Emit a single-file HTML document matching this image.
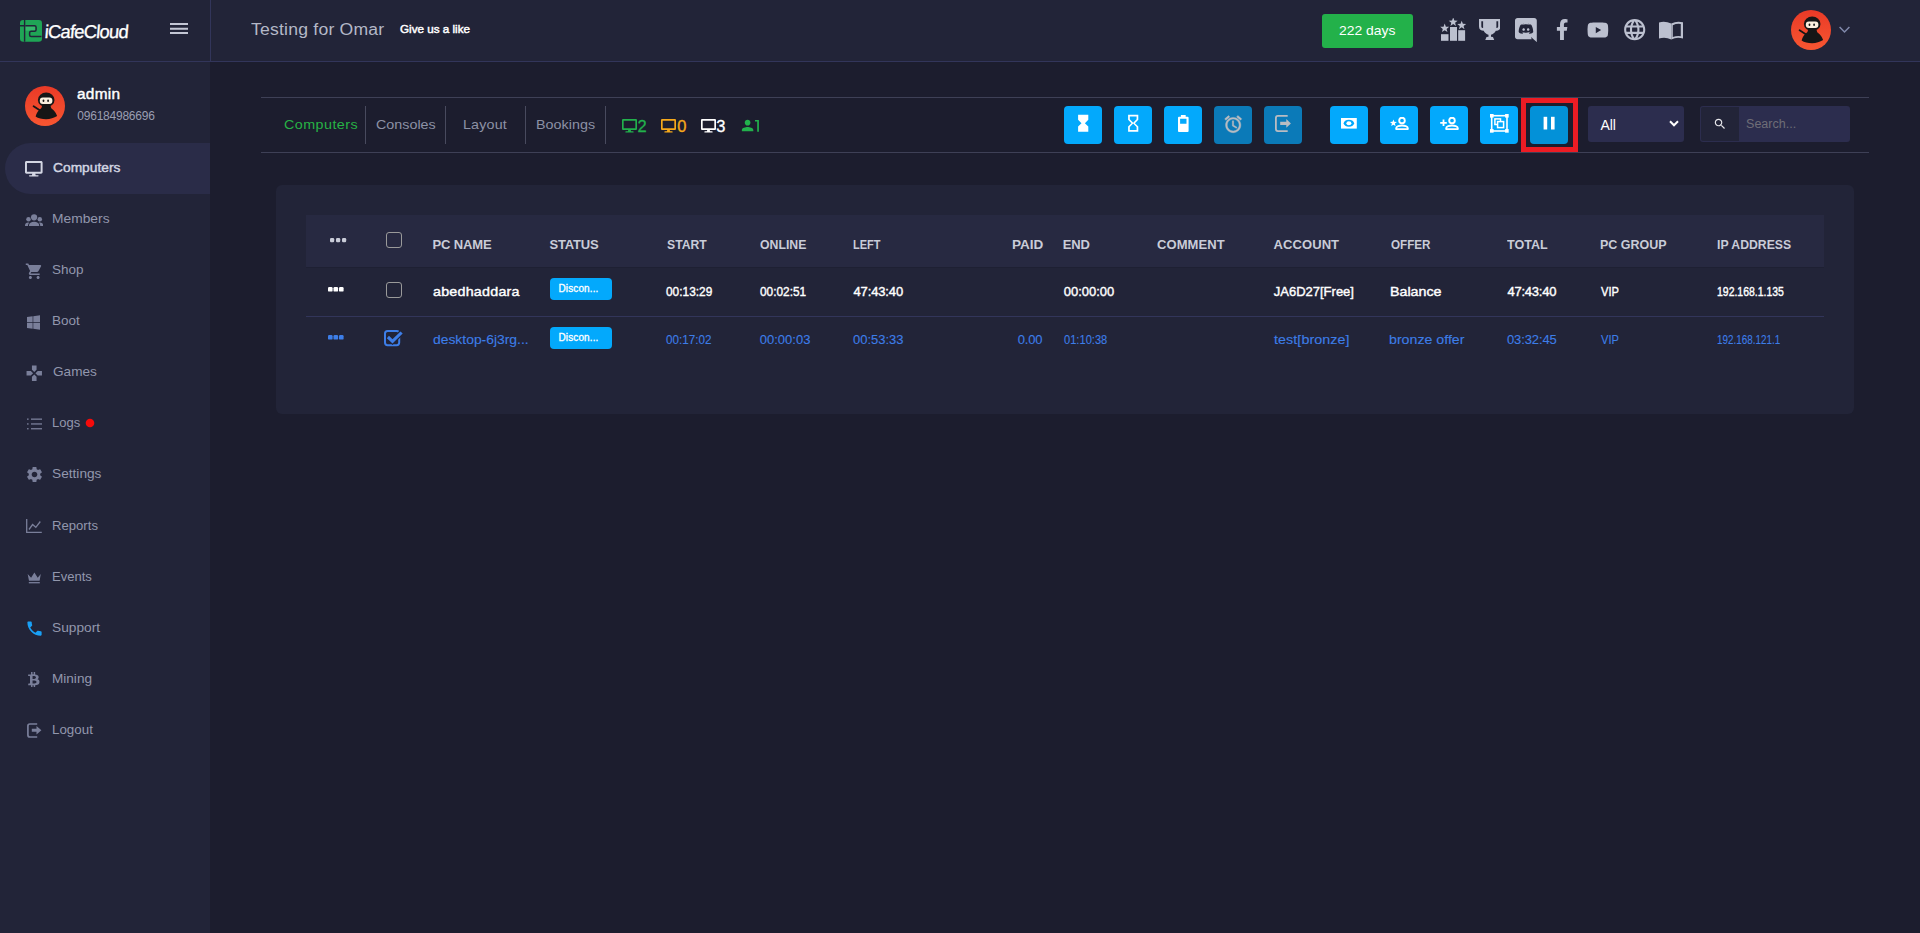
<!DOCTYPE html>
<html lang="en"><head><meta charset="utf-8"><title>iCafeCloud</title><style>
*{box-sizing:border-box}
html,body{margin:0;padding:0}
body{width:1920px;height:933px;overflow:hidden;background:#1c1d2e;font-family:"Liberation Sans",sans-serif;position:relative}
.b,.i,.t{position:absolute;display:block}
.t{white-space:pre;line-height:1}
header{position:absolute;left:0;top:0;width:1920px;height:62px;background:#222438;border-bottom:1px solid #32355a}
aside{position:absolute;left:0;top:62px;width:210px;height:871px;background:#222438}
main{position:absolute;left:0;top:0;width:1920px;height:933px}
</style></head><body>
<header>
<div class="b" style="left:210px;top:0px;width:1px;height:61px;background:#32355a;"></div>
<svg class="i" style="left:19.9px;top:20px" width="22" height="21.8" viewBox="0 0 22 21.8"><rect x="0" y="0" width="22" height="21.800" rx="3.200" fill="#1fa556"/><rect x="5.300" y="6.300" width="10" height="4.300" fill="#35b86b"/><path d="M4.600 0v21.800M0 5.700h4.600" stroke="#222438" stroke-width="1.400" fill="none"/><path d="M5.300 5.700h9.200q1.600 0 1.600 1.500v2.600q0 1.500-1.600 1.500H11.200q-1.600 0-1.600 1.500v2.200q0 1.500 1.600 1.500h10.300" stroke="#222438" stroke-width="1.500" fill="none"/></svg>
<span class="t" style="left:43.500px;top:22.700px;font-size:18.500px;color:#fff;letter-spacing:-.85px;-webkit-text-stroke:.3px #fff;transform:skewX(-5deg);transform-origin:0 100%">iCafeCloud</span>
<svg class="i" style="left:170px;top:22px" width="18" height="12" viewBox="0 0 18 12"><path d="M0 2h18M0 6.700h18M0 11.100h18" stroke="#c3c6d4" stroke-width="2"/></svg>
<span class="t" style="left:251.00px;top:22px;color:#b4b8c7;font-size:16px;transform:scaleX(1.1000);transform-origin:0 0;letter-spacing:0.19px;">Testing for Omar</span>
<span class="t" style="left:400.40px;top:24px;color:#ffffff;font-size:11px;-webkit-text-stroke:0.45px #ffffff;transform:scaleX(1.0606);transform-origin:0 0;">Give us a like</span>
<div class="b" style="left:1322px;top:14px;width:91px;height:34px;background:#23b14a;border-radius:3px;"></div>
<span class="t" style="left:1339.10px;top:24px;color:#ffffff;font-size:13.5px;transform:scaleX(1.0309);transform-origin:0 0;letter-spacing:0.00px;">222 days</span>
<svg class="i" style="left:1440px;top:18px" width="27" height="24" viewBox="0 0 27 24"><rect x="1" y="16.200" width="7.500" height="6.600" fill="#bcc0cf"/><rect x="10" y="9" width="7" height="13.800" fill="#bcc0cf"/><rect x="18.200" y="12.200" width="6.900" height="10.600" fill="#bcc0cf"/><polygon points="4.70,5.60 5.86,8.70 9.17,8.85 6.58,10.91 7.46,14.10 4.70,12.27 1.94,14.10 2.82,10.91 0.23,8.85 3.54,8.70" fill="#bcc0cf"/><polygon points="13.20,-0.60 14.36,2.50 17.67,2.65 15.08,4.71 15.96,7.90 13.20,6.07 10.44,7.90 11.32,4.71 8.73,2.65 12.04,2.50" fill="#bcc0cf"/><polygon points="21.70,2.70 22.86,5.80 26.17,5.95 23.58,8.01 24.46,11.20 21.70,9.37 18.94,11.20 19.82,8.01 17.23,5.95 20.54,5.80" fill="#bcc0cf"/></svg>
<svg class="i" style="left:1478.8px;top:18.9px" width="21.5" height="21.2" viewBox="0 0 21.500 21.200"><path fill-rule="evenodd" fill="#bcc0cf" d="M0 0H21.500V7.500C21.500 10.500 19.500 11.800 16.800 11.800C15.800 13.800 14 15.200 12 15.800V17.700L14 18L15.300 21.200H6.200L7.500 18L9.500 17.700V15.800C7.500 15.200 5.700 13.800 4.700 11.800C2 11.800 0 10.500 0 7.500Z M2.300 2.200H4.100V8.900H3.600Q2.300 8.900 2.300 7.500Z M19.200 2.200H17.400V8.900H17.900Q19.200 8.900 19.200 7.500Z"/></svg>
<svg class="i" style="left:1515px;top:18px" width="21.80" height="24.20" viewBox="0 0 448 512" preserveAspectRatio="none"><path fill="#bcc0cf" d="M297.216 243.2c0 15.616-11.520 28.416-26.112 28.416-14.336 0-26.112-12.800-26.112-28.416s11.520-28.416 26.112-28.416c14.592 0 26.112 12.800 26.112 28.416zm-119.552-28.416c-14.592 0-26.112 12.800-26.112 28.416s11.776 28.416 26.112 28.416c14.592 0 26.112-12.800 26.112-28.416.256-15.616-11.520-28.416-26.112-28.416zM448 52.736V512c-64.494-56.994-43.868-38.128-118.784-107.776l13.568 47.360H52.480C23.552 451.584 0 428.032 0 398.848V52.736C0 23.552 23.552 0 52.480 0h343.040C424.448 0 448 23.552 448 52.736zm-72.960 242.688c0-82.432-36.864-149.248-36.864-149.248-36.864-27.648-71.936-26.880-71.936-26.880l-3.584 4.096c43.520 13.312 63.744 32.512 63.744 32.512-60.811-33.329-132.244-33.335-191.232-7.424-9.472 4.352-15.104 7.424-15.104 7.424s21.248-20.224 67.328-33.536l-2.560-3.072s-35.072-.768-71.936 26.880c0 0-36.864 66.816-36.864 149.248 0 0 21.504 37.120 78.080 38.912 0 0 9.472-11.520 17.152-21.248-32.512-9.728-44.800-30.208-44.800-30.208 3.766 2.636 9.976 6.053 10.496 6.400 43.210 24.198 104.588 32.126 159.744 8.960 8.960-3.328 18.944-8.192 29.440-15.104 0 0-12.800 20.992-46.336 30.464 7.680 9.728 16.896 20.736 16.896 20.736 56.576-1.792 78.336-38.912 78.336-38.912z"/></svg>
<svg class="i" style="left:1556px;top:18.8px" width="12.40" height="21.00" viewBox="0 0 320 512" preserveAspectRatio="none"><path fill="#bcc0cf" d="M279.14 288l14.22-92.66h-88.91v-60.13c0-25.35 12.42-50.06 52.24-50.06h40.42V6.26S260.43 0 225.36 0c-73.22 0-121.08 44.38-121.08 124.72v70.62H22.89V288h81.39v224h100.17V288z"/></svg>
<svg class="i" style="left:1587.4px;top:19.6px" width="21.80" height="20.10" viewBox="0 0 576 512" preserveAspectRatio="none"><path fill="#bcc0cf" d="M549.655 124.083c-6.281-23.650-24.787-42.276-48.284-48.597C458.781 64 288 64 288 64S117.220 64 74.629 75.486c-23.497 6.322-42.003 24.947-48.284 48.597-11.412 42.867-11.412 132.305-11.412 132.305s0 89.438 11.412 132.305c6.281 23.650 24.787 41.500 48.284 47.821C117.220 448 288 448 288 448s170.780 0 213.371-11.486c23.497-6.321 42.003-24.171 48.284-47.821 11.412-42.867 11.412-132.305 11.412-132.305s0-89.438-11.412-132.305zm-317.510 213.508V175.185l142.739 81.205-142.739 81.201z"/></svg>
<svg class="i" style="left:1621.800px;top:16.600px" width="25.400" height="25.400" viewBox="0 0 24 24"><path fill="#bcc0cf" d="M11.990 2C6.470 2 2 6.480 2 12s4.470 10 9.990 10C17.520 22 22 17.520 22 12S17.520 2 11.990 2zm6.930 6h-2.950c-.32-1.250-.78-2.450-1.380-3.560 1.840.63 3.370 1.910 4.330 3.560zM12 4.040c.83 1.200 1.480 2.530 1.910 3.960h-3.820c.43-1.430 1.080-2.760 1.910-3.960zM4.260 14C4.100 13.360 4 12.690 4 12s.1-1.360.26-2h3.380c-.08.66-.14 1.320-.14 2 0 .68.06 1.340.14 2H4.260zm.82 2h2.950c.32 1.250.78 2.450 1.380 3.560-1.840-.63-3.370-1.900-4.330-3.560zm2.950-8H5.080c.96-1.660 2.490-2.930 4.330-3.560C8.810 5.550 8.350 6.750 8.030 8zM12 19.960c-.83-1.200-1.480-2.530-1.910-3.960h3.820c-.43 1.430-1.080 2.760-1.910 3.960zM14.340 14H9.660c-.09-.66-.16-1.320-.16-2 0-.68.07-1.350.16-2h4.680c.09.65.16 1.320.16 2 0 .68-.07 1.340-.16 2zm.25 5.560c.6-1.110 1.060-2.310 1.380-3.560h2.950c-.96 1.650-2.490 2.930-4.330 3.560zM16.360 14c.08-.66.14-1.320.14-2 0-.68-.06-1.340-.14-2h3.380c.16.64.26 1.310.26 2s-.1 1.360-.26 2h-3.380z"/></svg>
<svg class="i" style="left:1658.9px;top:21.4px" width="24.2" height="18.4" viewBox="0 0 24.200 18.400"><path d="M0 1.400Q6 -.6 12.300 2.600V18.400Q6 15.600 0 17.600Z" fill="#bcc0cf"/><path d="M12.300 2.600Q18 -.6 24.200 1.400V17.600Q18 15.600 12.300 18.400Z M13.800 4.200Q18 2.200 21.800 3V15.300Q18 14.700 13.800 16.100Z" fill="#bcc0cf" fill-rule="evenodd"/></svg>
<svg class="i" style="left:1791px;top:10px" width="40" height="40" viewBox="0 0 40 40"><defs><linearGradient id="ag1791" x1="0" y1="0" x2="0" y2="1"><stop offset="0" stop-color="#e93a27"/><stop offset="1" stop-color="#f85631"/></linearGradient></defs><circle cx="20" cy="20" r="20" fill="url(#ag1791)"/><path d="M10.600 30.600C12 25.500 15.500 22.200 18.500 21.300h5.500c3.500 1.200 6.800 4.500 8.100 8.800-3 2-7 3.200-11 3.200s-8-1-10.500-2.700z" fill="#161616"/><ellipse cx="21.200" cy="13.900" rx="8.300" ry="7.300" fill="#161616"/><path d="M17.300 19h8l1 3.500h-10z" fill="#161616"/><rect x="14.800" y="11.500" width="12.600" height="6.500" rx="3" fill="#fbf0df"/><ellipse cx="18.500" cy="14.800" rx=".9" ry="1.200" fill="#161616"/><ellipse cx="23.100" cy="14.800" rx=".9" ry="1.200" fill="#161616"/><path d="M8.600 20.200l5.800 3.900" stroke="#161616" stroke-width="1.800" stroke-linecap="round"/></svg>
<svg class="i" style="left:1838.5px;top:26.2px" width="11" height="8" viewBox="0 0 11 8"><path d="M.6 1l4.900 5 4.900-5" stroke="#8088aa" stroke-width="1.500" fill="none"/></svg>
</header>
<aside>
</aside>
<main>
<svg class="i" style="left:25px;top:86px" width="40" height="40" viewBox="0 0 40 40"><defs><linearGradient id="ag25" x1="0" y1="0" x2="0" y2="1"><stop offset="0" stop-color="#e93a27"/><stop offset="1" stop-color="#f85631"/></linearGradient></defs><circle cx="20" cy="20" r="20" fill="url(#ag25)"/><path d="M10.600 30.600C12 25.500 15.500 22.200 18.500 21.300h5.500c3.500 1.200 6.800 4.500 8.100 8.800-3 2-7 3.200-11 3.200s-8-1-10.500-2.700z" fill="#161616"/><ellipse cx="21.200" cy="13.900" rx="8.300" ry="7.300" fill="#161616"/><path d="M17.300 19h8l1 3.500h-10z" fill="#161616"/><rect x="14.800" y="11.500" width="12.600" height="6.500" rx="3" fill="#fbf0df"/><ellipse cx="18.500" cy="14.800" rx=".9" ry="1.200" fill="#161616"/><ellipse cx="23.100" cy="14.800" rx=".9" ry="1.200" fill="#161616"/><path d="M8.600 20.200l5.800 3.900" stroke="#161616" stroke-width="1.800" stroke-linecap="round"/></svg>
<span class="t" style="left:77.00px;top:87px;color:#ffffff;font-size:14px;-webkit-text-stroke:0.4px #ffffff;transform:scaleX(1.1000);transform-origin:0 0;letter-spacing:0.23px;">admin</span>
<span class="t" style="left:77.31px;top:110px;color:#9a9eb1;font-size:12px;letter-spacing:-0.23px;">096184986696</span>
<div class="b" style="left:5px;top:143px;width:205px;height:51px;background:#2a2c48;border-radius:26px 0 0 26px;"></div>
<nav>
<span class="t" style="left:53.20px;top:162px;color:#d3d6e3;font-size:12.6px;-webkit-text-stroke:0.4px #d3d6e3;transform:scaleX(1.0952);transform-origin:0 0;">Computers</span>
<span class="t" style="left:51.94px;top:213px;color:#9297ad;font-size:12.6px;transform:scaleX(1.0961);transform-origin:0 0;">Members</span>
<span class="t" style="left:52.10px;top:264px;color:#9297ad;font-size:12.6px;transform:scaleX(1.0714);transform-origin:0 0;">Shop</span>
<span class="t" style="left:52.08px;top:315px;color:#9297ad;font-size:12.6px;transform:scaleX(1.0720);transform-origin:0 0;">Boot</span>
<span class="t" style="left:53.20px;top:366px;color:#9297ad;font-size:12.6px;transform:scaleX(1.0800);transform-origin:0 0;">Games</span>
<span class="t" style="left:52.02px;top:417px;color:#9297ad;font-size:12.6px;transform:scaleX(1.0308);transform-origin:0 0;">Logs</span>
<span class="t" style="left:51.99px;top:468px;color:#9297ad;font-size:12.6px;transform:scaleX(1.0864);transform-origin:0 0;letter-spacing:0.00px;">Settings</span>
<span class="t" style="left:52.11px;top:520px;color:#9297ad;font-size:12.6px;transform:scaleX(1.0419);transform-origin:0 0;">Reports</span>
<span class="t" style="left:51.96px;top:571px;color:#9297ad;font-size:12.6px;transform:scaleX(1.0351);transform-origin:0 0;">Events</span>
<span class="t" style="left:51.96px;top:622px;color:#9297ad;font-size:12.6px;transform:scaleX(1.0884);transform-origin:0 0;">Support</span>
<span class="t" style="left:52.32px;top:673px;color:#9297ad;font-size:12.6px;transform:scaleX(1.0778);transform-origin:0 0;">Mining</span>
<span class="t" style="left:52.32px;top:724px;color:#9297ad;font-size:12.6px;transform:scaleX(1.0605);transform-origin:0 0;">Logout</span>
<svg class="i" style="left:25.3px;top:161.3px" width="17.60" height="15.60" viewBox="0 0 576 512" preserveAspectRatio="none"><path fill="#d3d6e3" d="M528 0H48C21.5 0 0 21.5 0 48v320c0 26.5 21.5 48 48 48h192l-16 48h-72c-13.3 0-24 10.7-24 24s10.7 24 24 24h272c13.3 0 24-10.7 24-24s-10.7-24-24-24h-72l-16-48h192c26.5 0 48-21.5 48-48V48c0-26.5-21.5-48-48-48zm-16 352H64V64h448v288z"/></svg>
<svg class="i" style="left:25px;top:213.6px" width="18.2" height="12.5" viewBox="0 0 18.200 12.500"><circle cx="9.100" cy="3.300" r="3.100" fill="#7a7f9a"/><circle cx="3.500" cy="5.200" r="2.250" fill="#7a7f9a"/><circle cx="14.800" cy="5.200" r="2.250" fill="#7a7f9a"/><path d="M4 12.500v-1.300c0-2.100 2.300-3.400 5.100-3.400s5.100 1.300 5.100 3.400v1.300z" fill="#7a7f9a"/><path d="M0 12.500v-1c0-1.600 1.300-2.900 3.200-2.900q.6 0 1 .1c-.8.700-1.200 1.600-1.200 2.600v1.200z" fill="#7a7f9a"/><path d="M18.200 12.500v-1c0-1.600-1.300-2.900-3.200-2.900q-.6 0-1 .1c.8.700 1.200 1.600 1.200 2.600v1.200z" fill="#7a7f9a"/></svg>
<svg class="i" style="left:24.7px;top:262.2px" width="18.5" height="18.5" viewBox="0 0 24 24"><path fill="#7a7f9a" d="M7 18c-1.1 0-1.99.9-1.99 2S5.9 22 7 22s2-.9 2-2-.9-2-2-2zM1 2v2h2l3.6 7.59-1.35 2.45c-.16.28-.25.61-.25.96 0 1.1.9 2 2 2h12v-2H7.42c-.14 0-.25-.11-.25-.25l.03-.12.9-1.63h7.45c.75 0 1.41-.41 1.75-1.03l3.58-6.49c.08-.14.12-.31.12-.48 0-.55-.45-1-1-1H5.21l-.94-2H1zm16 16c-1.1 0-1.99.9-1.99 2s.89 2 1.99 2 2-.9 2-2-.9-2-2-2z"/></svg>
<svg class="i" style="left:26.7px;top:313.7px" width="13.80" height="17.00" viewBox="0 0 448 512" preserveAspectRatio="none"><path fill="#7a7f9a" d="M0 93.7l183.6-25.3v177.4H0V93.7zm0 324.6l183.6 25.3V268.4H0v149.9zm203.8 28L448 480V268.4H203.8v177.9zm0-380.6v180.1H448V32L203.8 65.7z"/></svg>
<svg class="i" style="left:25.2px;top:364.1px" width="18.5" height="18.5" viewBox="0 0 24 24"><path fill="#7a7f9a" d="M15 7.5V2H9v5.5l3 3 3-3zM7.5 9H2v6h5.5l3-3-3-3zM9 16.5V22h6v-5.5l-3-3-3 3zM16.5 9l-3 3 3 3H22V9h-5.5z"/></svg>
<svg class="i" style="left:26.7px;top:418.3px" width="15" height="12" viewBox="0 0 15 12"><rect x="0" y="0.5" width="1.600" height="1.300" fill="#7a7f9a"/><rect x="4" y="0.5" width="11" height="1.300" fill="#7a7f9a"/><rect x="0" y="5.3" width="1.600" height="1.300" fill="#7a7f9a"/><rect x="4" y="5.3" width="11" height="1.300" fill="#7a7f9a"/><rect x="0" y="10.1" width="1.600" height="1.300" fill="#7a7f9a"/><rect x="4" y="10.1" width="11" height="1.300" fill="#7a7f9a"/></svg>
<svg class="i" style="left:24.5px;top:464.5px" width="19" height="19" viewBox="0 0 24 24"><path fill="#7a7f9a" d="M19.14 12.94c.04-.3.06-.61.06-.94 0-.32-.02-.64-.07-.94l2.03-1.58c.18-.14.23-.41.12-.61l-1.92-3.32c-.12-.22-.37-.29-.59-.22l-2.39.96c-.5-.38-1.03-.7-1.62-.94l-.36-2.54c-.04-.24-.24-.41-.48-.41h-3.84c-.24 0-.43.17-.47.41l-.36 2.54c-.59.24-1.13.57-1.62.94l-2.39-.96c-.22-.08-.47 0-.59.22L2.74 8.87c-.12.21-.08.47.12.61l2.03 1.58c-.05.3-.09.63-.09.94s.02.64.07.94l-2.03 1.58c-.18.14-.23.41-.12.61l1.92 3.32c.12.22.37.29.59.22l2.39-.96c.5.38 1.03.7 1.62.94l.36 2.54c.05.24.24.41.48.41h3.84c.24 0 .44-.17.47-.41l.36-2.54c.59-.24 1.13-.56 1.62-.94l2.39.96c.22.08.47 0 .59-.22l1.92-3.32c.12-.22.07-.47-.12-.61l-2.01-1.58zM12 15.6c-1.98 0-3.6-1.62-3.6-3.6s1.62-3.6 3.6-3.600 3.600 1.620 3.600 3.600-1.620 3.600-3.600 3.600z"/></svg>
<svg class="i" style="left:26.2px;top:518.7px" width="15.8" height="15" viewBox="0 0 15.8 15"><path d="M.7 0v13.300H15.800" stroke="#7a7f9a" stroke-width="1.300" fill="none"/><path d="M3 10.500l3.600-5 3.200 2.800 4.500-5.800" stroke="#7a7f9a" stroke-width="1.300" fill="none"/></svg>
<svg class="i" style="left:27px;top:572px" width="15" height="12" viewBox="0 0 15 12"><path d="M.65 1.900L4.100 5.800 7.400 .5 10.700 5.800 13.800 1.900 12.600 8.700H2z" fill="#7a7f9a"/><path d="M1.800 10.700h11" stroke="#7a7f9a" stroke-width="1.300"/></svg>
<svg class="i" style="left:24.5px;top:618.5px" width="19" height="19" viewBox="0 0 24 24"><path fill="#19a0f5" d="M6.62 10.79c1.44 2.83 3.76 5.14 6.59 6.59l2.2-2.2c.27-.27.67-.36 1.02-.24 1.12.37 2.33.57 3.57.57.55 0 1 .45 1 1V20c0 .55-.45 1-1 1-9.39 0-17-7.61-17-17 0-.55.45-1 1-1h3.5c.55 0 1 .45 1 1 0 1.25.2 2.45.57 3.57.11.35.03.74-.25 1.02l-2.2 2.2z"/></svg>
<svg class="i" style="left:28.1px;top:671.8px" width="11.60" height="15.40" viewBox="0 0 384 512" preserveAspectRatio="none"><path fill="#7a7f9a" d="M310.204 242.638c27.73-14.18 45.377-39.39 41.28-81.3-5.358-57.351-52.458-76.573-114.85-81.929V0h-48.528v77.203c-12.605 0-25.525.315-38.444.63V0h-48.528v79.409c-17.842.539-38.622.276-97.37 0v51.678c38.314-.678 58.417-3.14 63.023 21.427v217.429c-2.925 19.492-18.524 16.685-53.255 16.071L3.765 443.68c88.481 0 97.37.315 97.37.315V512h48.528v-67.06c13.234.315 26.154.315 38.444.315V512h48.528v-68.005c81.299-4.412 135.647-24.894 142.895-101.467 5.671-61.446-23.32-88.862-69.326-99.89zM150.608 134.553c27.415 0 113.126-8.507 113.126 48.528 0 54.515-85.71 48.212-113.126 48.212v-96.74zm0 251.776V279.821c32.772 0 133.127-9.138 133.127 53.255-.001 60.186-100.355 53.253-133.127 53.253z"/></svg>
<svg class="i" style="left:26.7px;top:721.8px" width="15" height="16" viewBox="0 0 15 16"><path d="M10.200 2H2.900c-1.100 0-2 .9-2 2v9c0 1.100.9 2 2 2H10.200" stroke="#7a7f9a" stroke-width="1.700" fill="none"/><path d="M4.800 6.700h4.700V3.900l4.900 4.300-4.900 4.300v-2.800h-4.700z" fill="#7a7f9a"/></svg>
<svg class="i" style="left:85px;top:418px" width="10" height="10" viewBox="0 0 10 10"><circle cx="5" cy="5" r="4.300" fill="#f50b0b"/></svg>
</nav>
<div class="b" style="left:261px;top:97px;width:1608px;height:1px;background:#3e4056;"></div>
<div class="b" style="left:261px;top:152px;width:1608px;height:1px;background:#3e4056;"></div>
<span class="t" style="left:284.00px;top:118px;color:#27b345;font-size:13px;transform:scaleX(1.1000);transform-origin:0 0;letter-spacing:0.42px;">Computers</span>
<span class="t" style="left:376.00px;top:118px;color:#8c91a5;font-size:13px;transform:scaleX(1.1000);transform-origin:0 0;letter-spacing:0.01px;">Consoles</span>
<span class="t" style="left:463.42px;top:118px;color:#8c91a5;font-size:13px;transform:scaleX(1.1000);transform-origin:0 0;letter-spacing:0.15px;">Layout</span>
<span class="t" style="left:536.21px;top:118px;color:#8c91a5;font-size:13px;transform:scaleX(1.1000);transform-origin:0 0;letter-spacing:0.05px;">Bookings</span>
<span class="t" style="left:637.42px;top:118px;color:#22b14c;font-size:16.5px;-webkit-text-stroke:0.3px #22b14c;">2</span>
<span class="t" style="left:677.21px;top:118px;color:#f6a91b;font-size:16.5px;-webkit-text-stroke:0.3px #f6a91b;">0</span>
<span class="t" style="left:716.27px;top:118px;color:#ffffff;font-size:16.5px;-webkit-text-stroke:0.3px #ffffff;">3</span>
<svg class="i" style="left:755.4px;top:120.4px" width="4" height="11.8" viewBox="0 0 4 11.800"><title>1</title><path d="M0 0H3.900V11.800H2.200V1.600H0Z" fill="#22b14c"/></svg>
<div class="b" style="left:365px;top:106px;width:1px;height:38px;background:#484a5e;"></div>
<div class="b" style="left:445px;top:106px;width:1px;height:38px;background:#484a5e;"></div>
<div class="b" style="left:525px;top:106px;width:1px;height:38px;background:#484a5e;"></div>
<div class="b" style="left:605px;top:106px;width:1px;height:38px;background:#484a5e;"></div>
<svg class="i" style="left:621.8px;top:119.25px" width="15.00" height="13.60" viewBox="0 0 576 512" preserveAspectRatio="none"><path fill="#22b14c" d="M528 0H48C21.5 0 0 21.5 0 48v320c0 26.5 21.5 48 48 48h192l-16 48h-72c-13.3 0-24 10.7-24 24s10.7 24 24 24h272c13.3 0 24-10.7 24-24s-10.7-24-24-24h-72l-16-48h192c26.5 0 48-21.5 48-48V48c0-26.5-21.5-48-48-48zm-16 352H64V64h448v288z"/></svg>
<svg class="i" style="left:661px;top:119.25px" width="15.00" height="13.60" viewBox="0 0 576 512" preserveAspectRatio="none"><path fill="#f6a91b" d="M528 0H48C21.5 0 0 21.5 0 48v320c0 26.5 21.5 48 48 48h192l-16 48h-72c-13.3 0-24 10.7-24 24s10.7 24 24 24h272c13.3 0 24-10.7 24-24s-10.7-24-24-24h-72l-16-48h192c26.5 0 48-21.5 48-48V48c0-26.5-21.5-48-48-48zm-16 352H64V64h448v288z"/></svg>
<svg class="i" style="left:700.6px;top:119.25px" width="15.00" height="13.60" viewBox="0 0 576 512" preserveAspectRatio="none"><path fill="#ffffff" d="M528 0H48C21.5 0 0 21.5 0 48v320c0 26.5 21.5 48 48 48h192l-16 48h-72c-13.3 0-24 10.7-24 24s10.7 24 24 24h272c13.3 0 24-10.7 24-24s-10.7-24-24-24h-72l-16-48h192c26.5 0 48-21.5 48-48V48c0-26.5-21.5-48-48-48zm-16 352H64V64h448v288z"/></svg>
<svg class="i" style="left:738.9px;top:117.4px" width="17.2" height="17.2" viewBox="0 0 24 24"><path fill="#22b14c" d="M12 12c2.210 0 4-1.790 4-4s-1.790-4-4-4-4 1.790-4 4 1.790 4 4 4zm0 2c-2.670 0-8 1.340-8 4v2h16v-2c0-2.660-5.330-4-8-4z"/></svg>
<div class="b" style="left:1064px;top:106px;width:38px;height:38px;background:#03a9fc;border-radius:4px;"></div>
<div class="b" style="left:1114px;top:106px;width:38px;height:38px;background:#03a9fc;border-radius:4px;"></div>
<div class="b" style="left:1164px;top:106px;width:38px;height:38px;background:#03a9fc;border-radius:4px;"></div>
<div class="b" style="left:1214px;top:106px;width:38px;height:38px;background:#0b7ab8;border-radius:4px;"></div>
<div class="b" style="left:1264px;top:106px;width:38px;height:38px;background:#0b7ab8;border-radius:4px;"></div>
<div class="b" style="left:1330px;top:106px;width:38px;height:38px;background:#03a9fc;border-radius:4px;"></div>
<div class="b" style="left:1380px;top:106px;width:38px;height:38px;background:#03a9fc;border-radius:4px;"></div>
<div class="b" style="left:1430px;top:106px;width:38px;height:38px;background:#03a9fc;border-radius:4px;"></div>
<div class="b" style="left:1480px;top:106px;width:38px;height:38px;background:#03a9fc;border-radius:4px;"></div>
<div class="b" style="left:1530px;top:106px;width:38px;height:38px;background:#0391d8;border-radius:4px;"></div>
<svg class="i" style="left:1072.9px;top:113.4px" width="20.4" height="20.4" viewBox="0 0 24 24"><path fill="#ffffff" d="M6 2v6h.01L6 8.01 10 12l-4 4 .01.01H6V22h12v-5.990h-.01L18 16l-4-4 4-3.990-.01-.01H18V2H6z"/></svg>
<svg class="i" style="left:1123px;top:113.4px" width="20.4" height="20.4" viewBox="0 0 24 24"><path fill="#ffffff" d="M6 2v6h.01L6 8.01 10 12l-4 4 .01.01H6V22h12v-5.990h-.01L18 16l-4-4 4-3.990-.01-.01H18V2H6zm10 14.500V20H8v-3.500l4-4 4 4zm-4-5l-4-4V4h8v3.500l-4 4z"/></svg>
<svg class="i" style="left:1178px;top:115.1px" width="10.6" height="17" viewBox="0 0 10.6 17"><path d="M2.900 0h4.800v1.700h1.900q1 0 1 1V16q0 1-1 1H1q-1 0-1-1V2.700q0-1 1-1h1.900z M2.100 3.800v4.900h6.400V3.800z" fill="#ffffff" fill-rule="evenodd"/></svg>
<svg class="i" style="left:1222.7px;top:113.5px" width="20.4" height="20.4" viewBox="0 0 24 24"><path stroke="#b9bcc2" stroke-width=".5" fill="#b9bcc2" d="M22 5.720l-4.600-3.860-1.290 1.530 4.600 3.860L22 5.720zM7.880 3.390L6.600 1.860 2 5.710l1.290 1.530 4.590-3.850zM12.500 8H11v6l4.750 2.850.750-1.230-4-2.370V8zM12 4c-4.970 0-9 4.030-9 9s4.020 9 9 9c4.970 0 9-4.030 9-9s-4.030-9-9-9zm0 16c-3.870 0-7-3.130-7-7s3.130-7 7-7 7 3.130 7 7-3.130 7-7 7z"/></svg>
<svg class="i" style="left:1275px;top:115.1px" width="16" height="17" viewBox="0 0 16 17"><path d="M12.700 .9H2.900c-1.100 0-2 .9-2 2v11.200c0 1.100.9 2 2 2h9.800" stroke="#b9bcc2" stroke-width="1.800" fill="none"/><path d="M5.200 6.700h6.100V4.100l4.600 4.300-4.600 4.300v-2.600H5.200z" fill="#b9bcc2"/></svg>
<svg class="i" style="left:1341.1px;top:118.2px" width="15.8" height="10.6" viewBox="0 0 15.8 10.6"><rect width="15.800" height="10.600" fill="#ffffff"/><ellipse cx="7.900" cy="5.300" rx="5.200" ry="3.500" fill="#03a9fc"/><ellipse cx="7.900" cy="5.300" rx="2.500" ry="2" fill="#ffffff"/></svg>
<svg class="i" style="left:1388.7px;top:117px" width="21" height="15" viewBox="0 0 21 15"><polygon points="4.40,2.40 5.31,4.84 7.92,4.96 5.88,6.58 6.57,9.09 4.40,7.65 2.23,9.09 2.92,6.58 0.88,4.96 3.49,4.84" fill="#ffffff"/><circle cx="13" cy="3.500" r="2.800" stroke="#ffffff" stroke-width="1.900" fill="none"/><path d="M7.200 12.100v-.8c0-1.900 3.500-2.800 5.800-2.800s5.800.9 5.800 2.800v.8z" stroke="#ffffff" stroke-width="1.900" fill="none" stroke-linejoin="round"/></svg>
<svg class="i" style="left:1438.7px;top:117px" width="21" height="15" viewBox="0 0 21 15"><path d="M4.500 2.500v6.600M1.200 5.800h6.600" stroke="#ffffff" stroke-width="1.800"/><circle cx="13" cy="3.500" r="2.800" stroke="#ffffff" stroke-width="1.900" fill="none"/><path d="M7.200 12.100v-.8c0-1.900 3.500-2.800 5.800-2.800s5.800.9 5.800 2.800v.8z" stroke="#ffffff" stroke-width="1.900" fill="none" stroke-linejoin="round"/></svg>
<svg class="i" style="left:1490px;top:114.2px" width="18.7" height="18.7" viewBox="0 0 18.700 18.700"><rect x="1.700" y="1.700" width="15.300" height="15.300" stroke="#ffffff" stroke-width="1.600" fill="none"/><rect x="0" y="0" width="3.600" height="3.600" fill="#ffffff"/><rect x="0" y="15.1" width="3.600" height="3.600" fill="#ffffff"/><rect x="15.1" y="0" width="3.600" height="3.600" fill="#ffffff"/><rect x="15.1" y="15.1" width="3.600" height="3.600" fill="#ffffff"/><rect x="4.900" y="4.900" width="5.600" height="5.600" stroke="#ffffff" stroke-width="1.500" fill="none"/><rect x="7.600" y="7.600" width="6" height="6" stroke="#ffffff" stroke-width="1.500" fill="#03a9fc"/></svg>
<svg class="i" style="left:1543px;top:116px" width="13" height="14" viewBox="0 0 13 14"><rect x=".6" y=".8" width="3.600" height="12.700" fill="#ffffff"/><rect x="8" y=".8" width="3.600" height="12.700" fill="#ffffff"/></svg>
<div class="b" style="left:1521px;top:98px;width:57px;height:54px;border:5px solid #ec1c24"></div>
<div class="b" style="left:1588px;top:106px;width:96px;height:36px;background:#2c2d4e;border-radius:3px;"></div>
<span class="t" style="left:1600.39px;top:118px;color:#ffffff;font-size:14px;">All</span>
<svg class="i" style="left:1669px;top:120px" width="10" height="7" viewBox="0 0 10 7"><path d="M1 1.300l4 4 4-4" stroke="#fff" stroke-width="2" fill="none"/></svg>
<div class="b" style="left:1700px;top:106px;width:150px;height:36px;background:#2c2d4e;border-radius:3px;"></div>
<div class="b" style="left:1701px;top:107px;width:38px;height:34px;background:#222438;border-radius:2px 0 0 2px;"></div>
<svg class="i" style="left:1713px;top:117px" width="14" height="14" viewBox="0 0 24 24"><path fill="#e6e6ea" d="M15.5 14h-.79l-.28-.27C15.41 12.59 16 11.11 16 9.5 16 5.910 13.090 3 9.500 3S3 5.910 3 9.500 5.910 16 9.500 16c1.610 0 3.090-.590 4.230-1.570l.270.280v.790l5 4.990L20.490 19l-4.990-5zm-6 0C7.010 14 5 11.990 5 9.500S7.010 5 9.500 5 14 7.010 14 9.500 11.990 14 9.500 14z"/></svg>
<span class="t" style="left:1746.06px;top:118px;color:#6f6d77;font-size:12.5px;letter-spacing:0.01px;">Search...</span>
<div class="b" style="left:276px;top:185px;width:1578px;height:229px;background:#222438;border-radius:6px;"></div>
<div class="b" style="left:306px;top:215px;width:1518px;height:52px;background:#272941;"></div>
<div class="b" style="left:306px;top:267px;width:1518px;height:1px;background:#1e2033;"></div>
<div class="b" style="left:306px;top:316px;width:1518px;height:1px;background:#32355a;"></div>
<svg class="i" style="left:329.7px;top:238.2px" width="17" height="5" viewBox="0 0 17 5"><rect x="0.00" y="0" width="4.2" height="4.2" rx="1.200" fill="#c9ccd8"/><rect x="6.00" y="0" width="4.2" height="4.2" rx="1.200" fill="#c9ccd8"/><rect x="12.00" y="0" width="4.2" height="4.2" rx="1.200" fill="#c9ccd8"/></svg>
<svg class="i" style="left:327.5px;top:287.4px" width="17" height="6" viewBox="0 0 17 6"><rect x="0.00" y="0" width="4.6" height="4.6" rx="1.200" fill="#ffffff"/><rect x="5.50" y="0" width="4.6" height="4.6" rx="1.200" fill="#ffffff"/><rect x="11.00" y="0" width="4.6" height="4.6" rx="1.200" fill="#ffffff"/></svg>
<svg class="i" style="left:327.5px;top:335.1px" width="17" height="6" viewBox="0 0 17 6"><rect x="0.00" y="0" width="4.6" height="4.6" rx="1.200" fill="#3d7ee8"/><rect x="5.50" y="0" width="4.6" height="4.6" rx="1.200" fill="#3d7ee8"/><rect x="11.00" y="0" width="4.6" height="4.6" rx="1.200" fill="#3d7ee8"/></svg>
<div class="b" style="left:386px;top:232px;width:16px;height:16px;border:1.500px solid #9a9a9a;border-radius:3px;background:transparent;"></div>
<div class="b" style="left:386px;top:282px;width:16px;height:16px;border:1.500px solid #9a9a9a;border-radius:3px;background:transparent;"></div>
<svg class="i" style="left:384px;top:329px" width="20" height="18" viewBox="0 0 20 18"><rect x="1" y="2" width="14.200" height="14.200" rx="2.600" stroke="#3d7ee8" stroke-width="2" fill="none"/><path d="M3.900 8L8.500 12.300L17.600 3.500" stroke="#222438" stroke-width="5.400" fill="none"/><path d="M3.900 8L8.500 12.300L17.600 3.500" stroke="#3d7ee8" stroke-width="3.100" fill="none"/></svg>
<span class="t" style="left:432.57px;top:238px;color:#c9ccd8;font-size:13px;font-weight:700;letter-spacing:-0.15px;">PC NAME</span>
<span class="t" style="left:549.48px;top:238px;color:#c9ccd8;font-size:13px;font-weight:700;letter-spacing:-0.16px;">STATUS</span>
<span class="t" style="left:666.50px;top:238px;color:#c9ccd8;font-size:13px;font-weight:700;transform:scaleX(0.9395);transform-origin:0 0;">START</span>
<span class="t" style="left:760.00px;top:238px;color:#c9ccd8;font-size:13px;font-weight:700;transform:scaleX(0.9439);transform-origin:0 0;">ONLINE</span>
<span class="t" style="left:852.76px;top:238px;color:#c9ccd8;font-size:13px;font-weight:700;transform:scaleX(0.8469);transform-origin:0 0;">LEFT</span>
<span class="t" style="left:1012.25px;top:238px;color:#c9ccd8;font-size:13px;font-weight:700;transform:scaleX(1.0414);transform-origin:0 0;">PAID</span>
<span class="t" style="left:1062.87px;top:238px;color:#c9ccd8;font-size:13px;font-weight:700;letter-spacing:-0.17px;">END</span>
<span class="t" style="left:1156.93px;top:238px;color:#c9ccd8;font-size:13px;font-weight:700;letter-spacing:0.12px;">COMMENT</span>
<span class="t" style="left:1273.58px;top:238px;color:#c9ccd8;font-size:13px;font-weight:700;letter-spacing:0.08px;">ACCOUNT</span>
<span class="t" style="left:1390.50px;top:238px;color:#c9ccd8;font-size:13px;font-weight:700;transform:scaleX(0.8977);transform-origin:0 0;">OFFER</span>
<span class="t" style="left:1507.20px;top:238px;color:#c9ccd8;font-size:13px;font-weight:700;transform:scaleX(0.9667);transform-origin:0 0;">TOTAL</span>
<span class="t" style="left:1600.27px;top:238px;color:#c9ccd8;font-size:13px;font-weight:700;transform:scaleX(0.9596);transform-origin:0 0;">PC GROUP</span>
<span class="t" style="left:1716.68px;top:238px;color:#c9ccd8;font-size:13px;font-weight:700;transform:scaleX(0.9423);transform-origin:0 0;">IP ADDRESS</span>
<span class="t" style="left:433.10px;top:285px;color:#ffffff;font-size:13px;-webkit-text-stroke:0.4px #ffffff;transform:scaleX(1.1000);transform-origin:0 0;letter-spacing:0.20px;">abedhaddara</span>
<span class="t" style="left:666.14px;top:285px;color:#ffffff;font-size:13px;-webkit-text-stroke:0.4px #ffffff;transform:scaleX(0.9140);transform-origin:0 0;">00:13:29</span>
<span class="t" style="left:760.00px;top:285px;color:#ffffff;font-size:13px;-webkit-text-stroke:0.4px #ffffff;transform:scaleX(0.9118);transform-origin:0 0;">00:02:51</span>
<span class="t" style="left:853.53px;top:285px;color:#ffffff;font-size:13px;-webkit-text-stroke:0.4px #ffffff;letter-spacing:-0.14px;">47:43:40</span>
<span class="t" style="left:1063.75px;top:285px;color:#ffffff;font-size:13px;-webkit-text-stroke:0.4px #ffffff;letter-spacing:-0.02px;">00:00:00</span>
<span class="t" style="left:1273.75px;top:285px;color:#ffffff;font-size:13px;-webkit-text-stroke:0.4px #ffffff;">JA6D27[Free]</span>
<span class="t" style="left:1389.59px;top:285px;color:#ffffff;font-size:13px;-webkit-text-stroke:0.4px #ffffff;transform:scaleX(1.0957);transform-origin:0 0;letter-spacing:0.00px;">Balance</span>
<span class="t" style="left:1507.43px;top:285px;color:#ffffff;font-size:13px;-webkit-text-stroke:0.4px #ffffff;letter-spacing:-0.23px;">47:43:40</span>
<span class="t" style="left:1601.00px;top:285px;color:#ffffff;font-size:13px;-webkit-text-stroke:0.4px #ffffff;transform:scaleX(0.8571);transform-origin:0 0;">VIP</span>
<span class="t" style="left:1717.03px;top:285px;color:#ffffff;font-size:13px;-webkit-text-stroke:0.4px #ffffff;transform:scaleX(0.8048);transform-origin:0 0;">192.168.1.135</span>
<span class="t" style="left:433.10px;top:333px;color:#3d7ee8;font-size:13px;-webkit-text-stroke:0.1px #3d7ee8;transform:scaleX(1.0674);transform-origin:0 0;">desktop-6j3rg...</span>
<span class="t" style="left:666.16px;top:333px;color:#3d7ee8;font-size:13px;-webkit-text-stroke:0.1px #3d7ee8;transform:scaleX(0.8980);transform-origin:0 0;">00:17:02</span>
<span class="t" style="left:759.64px;top:333px;color:#3d7ee8;font-size:13px;-webkit-text-stroke:0.1px #3d7ee8;letter-spacing:0.04px;">00:00:03</span>
<span class="t" style="left:852.97px;top:333px;color:#3d7ee8;font-size:13px;-webkit-text-stroke:0.1px #3d7ee8;">00:53:33</span>
<span class="t" style="left:1017.63px;top:333px;color:#3d7ee8;font-size:13px;-webkit-text-stroke:0.1px #3d7ee8;letter-spacing:-0.13px;">0.00</span>
<span class="t" style="left:1063.75px;top:333px;color:#3d7ee8;font-size:13px;-webkit-text-stroke:0.1px #3d7ee8;transform:scaleX(0.8550);transform-origin:0 0;">01:10:38</span>
<span class="t" style="left:1273.75px;top:333px;color:#3d7ee8;font-size:13px;-webkit-text-stroke:0.1px #3d7ee8;transform:scaleX(1.1000);transform-origin:0 0;letter-spacing:0.07px;">test[bronze]</span>
<span class="t" style="left:1389.34px;top:333px;color:#3d7ee8;font-size:13px;-webkit-text-stroke:0.1px #3d7ee8;transform:scaleX(1.0912);transform-origin:0 0;">bronze offer</span>
<span class="t" style="left:1506.89px;top:333px;color:#3d7ee8;font-size:13px;-webkit-text-stroke:0.1px #3d7ee8;letter-spacing:-0.09px;">03:32:45</span>
<span class="t" style="left:1601.00px;top:333px;color:#3d7ee8;font-size:13px;-webkit-text-stroke:0.1px #3d7ee8;transform:scaleX(0.8571);transform-origin:0 0;">VIP</span>
<span class="t" style="left:1716.72px;top:333px;color:#3d7ee8;font-size:13px;-webkit-text-stroke:0.1px #3d7ee8;transform:scaleX(0.7598);transform-origin:0 0;">192.168.121.1</span>
<div class="b" style="left:550px;top:278px;width:62px;height:22px;background:#03a9fc;border-radius:4px;"></div>
<div class="b" style="left:550px;top:327px;width:62px;height:22px;background:#03a9fc;border-radius:4px;"></div>
<span class="t" style="left:558.51px;top:284px;color:#ffffff;font-size:10px;-webkit-text-stroke:0.3px #ffffff;letter-spacing:0.12px;">Discon...</span>
<span class="t" style="left:558.51px;top:333px;color:#ffffff;font-size:10px;-webkit-text-stroke:0.3px #ffffff;letter-spacing:0.12px;">Discon...</span>
</main>
</body></html>
